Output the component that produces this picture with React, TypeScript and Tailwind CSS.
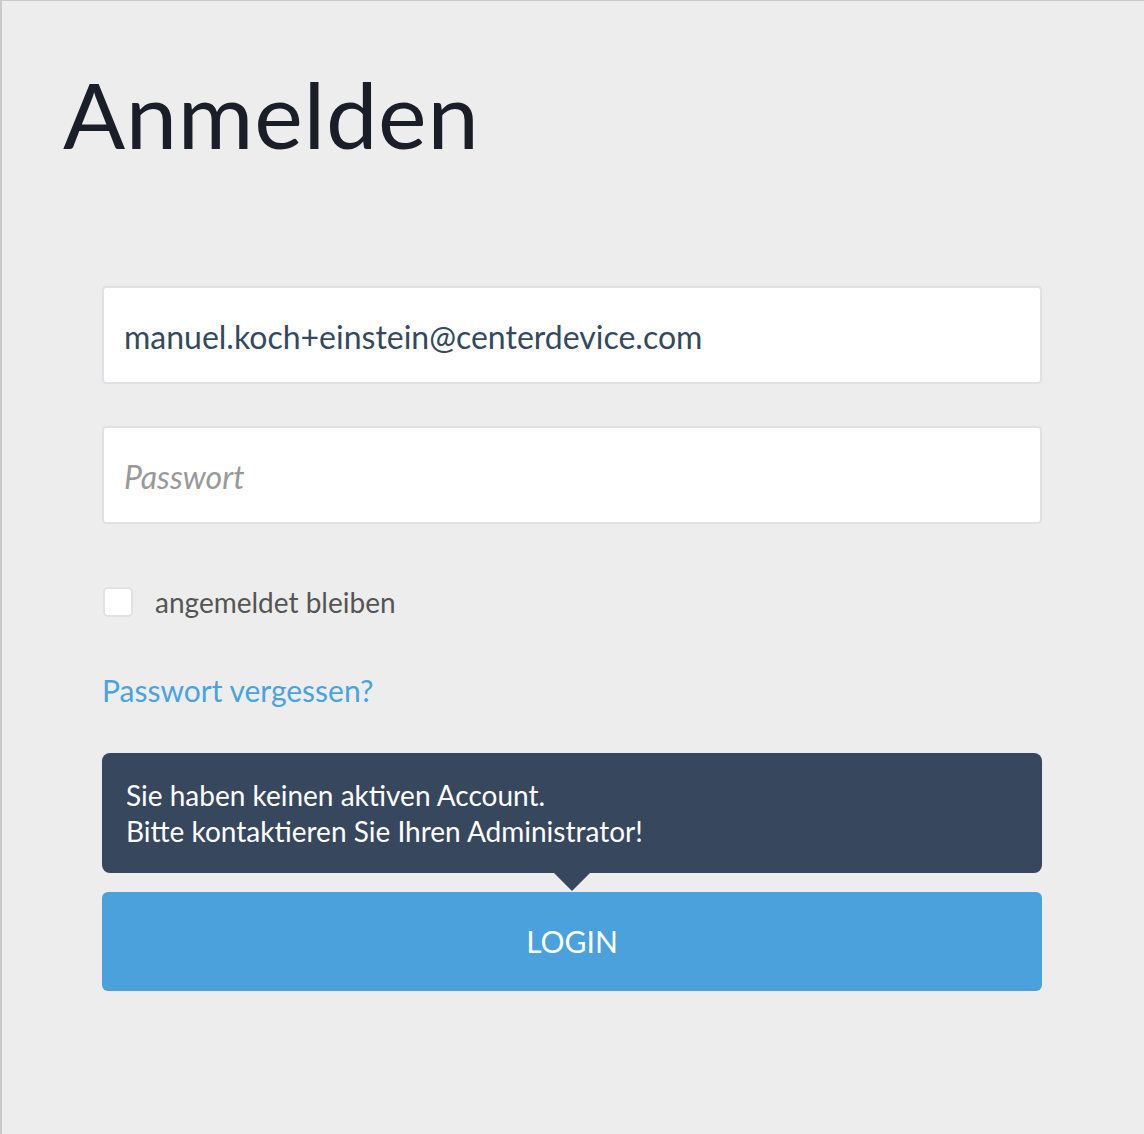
import React, { useState } from 'react';

const LoginPage = () => {
  const [email, setEmail] = useState('manuel.koch+einstein@centerdevice.com');
  const [password, setPassword] = useState('');
  const [remember, setRemember] = useState(false);

  return (
    <div className="min-h-[1134px] w-[1144px] bg-[#ededed] border-t border-l-2 border-[#c9c9c9] font-['Lato','Liberation_Sans',sans-serif]">
      <h1 className="pl-[61px] pt-[57px] text-[92px] leading-[112px] text-[#191e28] tracking-[0.7px]">Anmelden</h1>

      <form className="ml-[100px] mt-[116px] w-[940px] flex flex-col" onSubmit={(e) => e.preventDefault()}>
        <input
          type="email"
          value={email}
          onChange={(e) => setEmail(e.target.value)}
          className="h-[98px] w-full rounded-[4px] border-2 border-[#dfe1e6] bg-white px-[20px] pt-[2px] text-[32px] text-[#34495e] outline-none"
        />
        <input
          type="password"
          value={password}
          placeholder="Passwort"
          onChange={(e) => setPassword(e.target.value)}
          className="mt-[42px] h-[98px] w-full rounded-[4px] border-2 border-[#dfe1e6] bg-white px-[20px] pt-[2px] text-[32px] text-[#34495e] outline-none placeholder:italic placeholder:text-[#999999]"
        />

        <label className="mt-[57px] flex items-center gap-[22px] cursor-pointer">
          <span
            onClick={() => setRemember(!remember)}
            className={`ml-[1px] block h-[30px] w-[30px] rounded-[5px] border-2 border-[#e0e2e6] ${remember ? 'bg-[#4ba1dc]' : 'bg-white'}`}
          />
          <span className="text-[28px] text-[#555555]">angemeldet bleiben</span>
        </label>

        <a href="#" className="mt-[50px] text-[30px] leading-[34px] text-[#4aa3df]">Passwort vergessen?</a>

        <div className="relative mt-[46px] rounded-[8px] bg-[#37485e] px-[24px] pt-[24px] pb-[24px] text-[28px] leading-[36px] text-white">
          <p>Sie haben keinen aktiven Account.</p>
          <p>Bitte kontaktieren Sie Ihren Administrator!</p>
          <span className="absolute left-1/2 top-full -ml-[18px] h-0 w-0 border-x-[18px] border-t-[18px] border-x-transparent border-t-[#37485e]" />
        </div>

        <button
          type="submit"
          className="mt-[19px] h-[99px] w-full rounded-[6px] bg-[#4ba1dc] text-[30px] text-white"
        >
          LOGIN
        </button>
      </form>
    </div>
  );
};

export default function App() {
  return <LoginPage />;
}
